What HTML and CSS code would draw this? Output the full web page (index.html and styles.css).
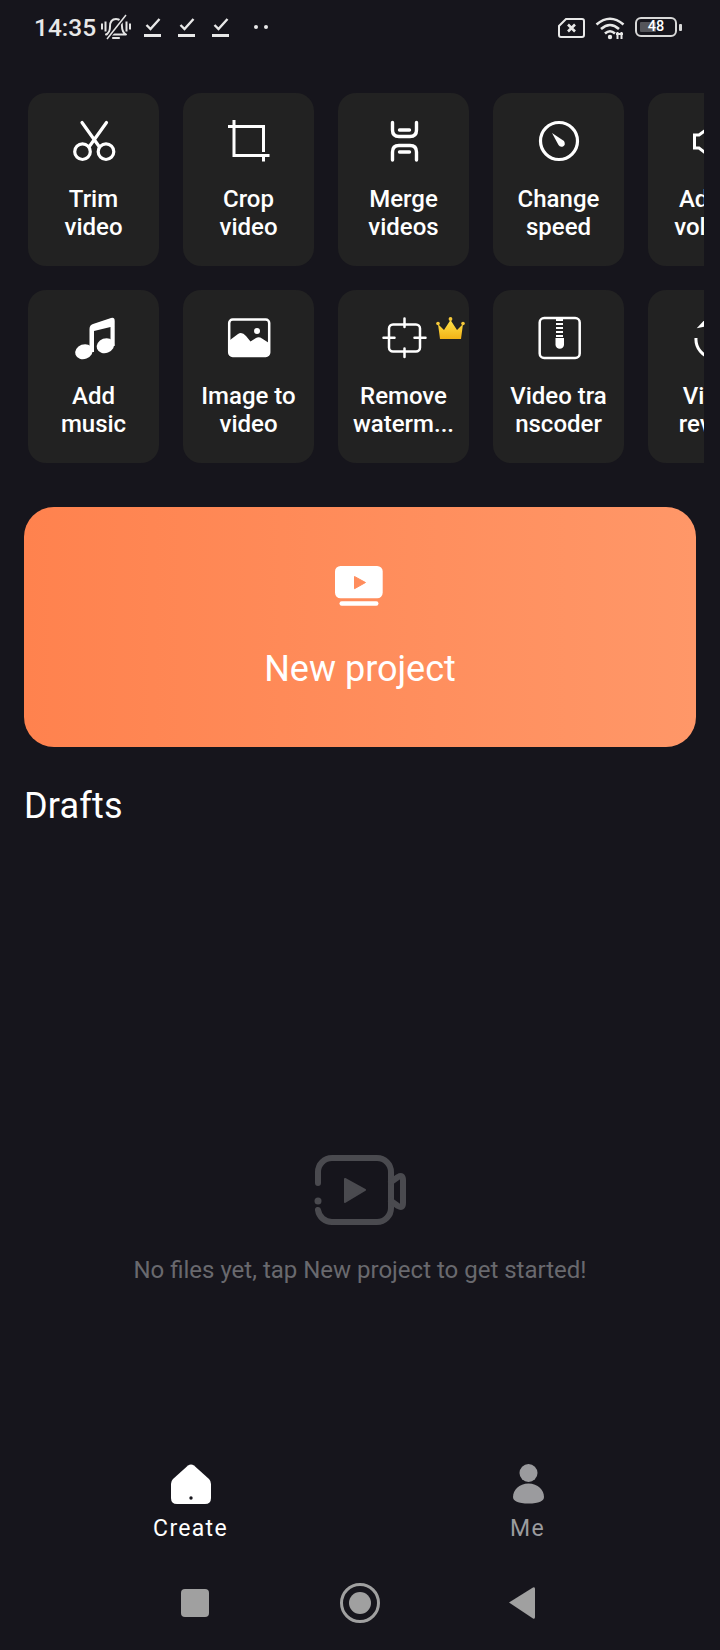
FILE: index.html

```html
<!DOCTYPE html>
<html lang="en">
<head>
  <meta charset="UTF-8" />
  <meta name="viewport" content="width=device-width, initial-scale=1.0"/>
  <title>Create</title>
  <link rel="stylesheet" href="styles.css">
</head>
<body>
<div class="page">

  <!-- status bar -->
  <div class="status">
    <span class="clock">14:35</span>
    <svg class="st-bell" viewBox="0 0 30 26"><path d="M6 20Q9 18 9 12.500Q9 5 15 5Q21 5 21 12.500Q21 18 25 20.500H5Z" fill="none" stroke="#e4e4e4" stroke-width="2" stroke-linejoin="round"/><path d="M12 24H18" stroke="#e4e4e4" stroke-width="2.200" stroke-linecap="round"/><path d="M6 25L25 1" stroke="#16151c" stroke-width="4"/><path d="M6 25L25 1" stroke="#e4e4e4" stroke-width="1.500"/><path d="M1 9.500V15.500M4.500 7.500V17.500M25.500 7.500V17.500M29 9.500V15.500" stroke="#e4e4e4" stroke-width="2"/></svg>
    <svg class="st-check" viewBox="0 0 17 20"><path d="M2.500 8L6.500 12L15.500 2" fill="none" stroke="#e8e8e8" stroke-width="2.400"/><path d="M0 18.500H17" stroke="#e8e8e8" stroke-width="3"/></svg>
    <svg class="st-check" viewBox="0 0 17 20"><path d="M2.500 8L6.500 12L15.500 2" fill="none" stroke="#e8e8e8" stroke-width="2.400"/><path d="M0 18.500H17" stroke="#e8e8e8" stroke-width="3"/></svg>
    <svg class="st-check" viewBox="0 0 17 20"><path d="M2.500 8L6.500 12L15.500 2" fill="none" stroke="#e8e8e8" stroke-width="2.400"/><path d="M0 18.500H17" stroke="#e8e8e8" stroke-width="3"/></svg>
    <span class="st-dots"><i></i><i></i></span>
    <span class="st-right">
      <svg class="st-sim" viewBox="0 0 27 20"><path d="M8 1H24Q26 1 26 3V17Q26 19 24 19H3Q1 19 1 17V8Z" fill="none" stroke="#e8e8e8" stroke-width="2"/><path d="M10 6.500L17 13.500M17 6.500L10 13.500" stroke="#e8e8e8" stroke-width="2.600"/></svg>
      <svg class="st-wifi" viewBox="0 0 30 24"><path d="M1.500 8.500Q15 -3 28.500 8.500M6 13Q15 5 24 13M10 17.500Q15 13 20 17.500" fill="none" stroke="#e8e8e8" stroke-width="2.600"/><circle cx="15" cy="21" r="2.200" fill="#e8e8e8"/><path d="M22.500 16V23M26.500 16V23" stroke="#e8e8e8" stroke-width="2"/><path d="M21 18H28" stroke="#e8e8e8" stroke-width="2"/></svg>
      <span class="battery"><span class="battery-level"></span><span class="battery-num">48</span></span>
      <span class="battery-nub"></span>
    </span>
  </div>

  <!-- tool rows -->
  <div class="tool-row">
    <div class="tool">
      <svg class="ico" viewBox="0 0 42 42"><g fill="none" stroke="#fff" stroke-width="3.200" stroke-linecap="round"><circle cx="9.500" cy="30.700" r="7.800"/><circle cx="33" cy="30.700" r="7.800"/><path d="M9 1.500L26.500 26M33.500 1.500L16 26"/></g></svg>
      <div class="tool-name">Trim<br>video</div>
    </div>
    <div class="tool">
      <svg class="ico" viewBox="0 0 42 42"><path d="M0 5.500H35.500V31M6 -1V34.500H41.500M35.500 34.500V40.500" fill="none" stroke="#fff" stroke-width="3"/></svg>
      <div class="tool-name">Crop<br>video</div>
    </div>
    <div class="tool">
      <svg class="ico" viewBox="0 0 42 42"><path d="M9.500 1.500V9Q9.500 15.500 16 15.500H27Q33.500 15.500 33.500 9V1.500M9.500 39V31Q9.500 24.500 16 24.500H27Q33.500 24.500 33.500 31V39M16.500 9H26.500M16.500 31H26.500" fill="none" stroke="#fff" stroke-width="3.400" stroke-linecap="round"/></svg>
      <div class="tool-name">Merge<br>videos</div>
    </div>
    <div class="tool">
      <svg class="ico" viewBox="0 0 42 42"><circle cx="21" cy="20" r="18.500" fill="none" stroke="#fff" stroke-width="3.200"/><path d="M14 12L26 20Q28 24 25 25.500Q22 26.500 20.500 24Z" fill="#fff"/></svg>
      <div class="tool-name">Change<br>speed</div>
    </div>
    <div class="tool">
      <svg class="ico" viewBox="0 0 42 42"><path d="M12 9.500L6 14H1.500V27H6L12 31.500L19 36V5ZM25 14Q29 20 25 27" fill="none" stroke="#fff" stroke-width="3"/></svg>
      <div class="tool-name">Adjust<br>volume</div>
    </div>
  </div>

  <div class="tool-row">
    <div class="tool">
      <svg class="ico" viewBox="0 0 42 42"><path d="M16.500 11Q16.500 7 20 6L38 0Q41.700 -1 41.700 3V28H37.500V9L21 13V34H16.500Z" fill="#fff"/><ellipse cx="11" cy="33.700" rx="9" ry="7.300" transform="rotate(-20 11 33.700)" fill="#fff"/><ellipse cx="32.500" cy="27.700" rx="9" ry="7.300" transform="rotate(-20 32.500 27.700)" fill="#fff"/></svg>
      <div class="tool-name">Add<br>music</div>
    </div>
    <div class="tool">
      <svg class="ico" viewBox="0 0 42 42"><rect x="1.200" y="1.500" width="40" height="36.500" rx="3.500" fill="none" stroke="#fff" stroke-width="2.500"/><circle cx="29" cy="13" r="3" fill="#fff"/><path d="M2 22L10 16Q14 13.500 18 18L22.500 23.500L28 20Q31 18.500 34 20.500L41 25V36Q41 38 39 38H4Q2 38 2 36Z" fill="#fff"/></svg>
      <div class="tool-name">Image to<br>video</div>
    </div>
    <div class="tool">
      <svg class="ico" viewBox="0 0 42 42"><rect x="6" y="6.500" width="31" height="27" rx="4" fill="none" stroke="#fff" stroke-width="2.500"/><path d="M21.500 0.500V9M21.500 30.500V39M0.500 19.700H11.500M31.500 19.700H42.500" fill="none" stroke="#fff" stroke-width="2.500" stroke-linecap="round"/></svg>
      <div class="tool-name">Remove<br>waterm...</div>
      <svg class="crown" viewBox="0 0 29 23"><defs><linearGradient id="gold" x1="0" y1="0" x2="0" y2="1"><stop offset="0" stop-color="#ffe24a"/><stop offset="1" stop-color="#f2b216"/></linearGradient></defs><path d="M2 7L8 13L14.500 3L21 13L27 7L25 22H4Z" fill="url(#gold)"/><circle cx="2" cy="6.500" r="1.800" fill="#f6c93a"/><circle cx="14.500" cy="2" r="1.900" fill="#f6c93a"/><circle cx="27" cy="6.500" r="1.800" fill="#f6c93a"/></svg>
    </div>
    <div class="tool">
      <svg class="ico" viewBox="0 0 42 42"><rect x="1.700" y="0" width="40" height="40" rx="4.500" fill="none" stroke="#fff" stroke-width="2.500"/><path d="M17.500 20H26V26.500A4.200 4.200 0 0 1 17.500 26.500Z" fill="#fff"/><path d="M18 2H25M18 6H25M18 10H25M18 14H25M18 18H25" stroke="#fff" stroke-width="2"/></svg>
      <div class="tool-name">Video tra<br>nscoder</div>
    </div>
    <div class="tool">
      <svg class="ico" viewBox="0 0 42 42"><path d="M3 20A18.500 18.500 0 1 0 24 3" fill="none" stroke="#fff" stroke-width="3"/><path d="M11.500 2L3.700 10.300L24 6Z" fill="#fff"/></svg>
      <div class="tool-name">Video<br>review</div>
    </div>
  </div>

  <!-- main button -->
  <div class="new-project">
    <svg class="new-ico" viewBox="0 0 48 40"><rect x="0" y="0" width="47.700" height="32.300" rx="5.500" fill="#fff"/><path d="M19.500 10.500L30.500 16.500L19.500 22.700Z" fill="#ff8d5d" stroke="#ff8d5d" stroke-width="1" stroke-linejoin="round"/><rect x="4.500" y="35.300" width="39" height="4.500" rx="2.200" fill="#fff"/></svg>
    <div class="new-label">New project</div>
  </div>

  <h2 class="drafts">Drafts</h2>

  <!-- empty state -->
  <div class="empty">
    <svg class="empty-ico" viewBox="0 0 94 74"><g fill="none" stroke="#4a4a4f" stroke-width="6" stroke-linecap="round" stroke-linejoin="round"><path d="M4 30V19A14 14 0 0 1 18 5H63A14 14 0 0 1 77 19V55A14 14 0 0 1 63 69H18A14 14 0 0 1 4 57"/><path d="M77 29L84 24Q89 21 89 27V50Q89 56 84 53L77 48"/></g><circle cx="4" cy="48" r="3.500" fill="#4a4a4f"/><path d="M31 26L51 37L31 49Z" fill="#4a4a4f" stroke="#4a4a4f" stroke-width="2" stroke-linejoin="round"/></svg>
    <div class="empty-text">No files yet, tap New project to get started!</div>
  </div>

  <!-- bottom tabs -->
  <div class="tabs">
    <div class="tab active">
      <svg class="tab-ico" viewBox="0 0 40 40"><path d="M17 1.500Q20 -0.500 23 1.500L38 15Q40 17 40 20V34Q40 40 34 40H6Q0 40 0 34V20Q0 17 2 15Z" fill="#fff"/><circle cx="20" cy="34" r="1.700" fill="#16151c"/></svg>
      <div>Create</div>
    </div>
    <div class="tab">
      <svg class="tab-ico" viewBox="0 0 40 40"><circle cx="20.500" cy="9" r="9" fill="#9b9b9e"/><path d="M20.500 19.500C30 19.500 36 26 36 33C36 37 31 39.500 20.500 39.500C10 39.500 5 37 5 33C5 26 11 19.500 20.500 19.500Z" fill="#9b9b9e"/></svg>
      <div>Me</div>
    </div>
  </div>

  <!-- android nav -->
  <div class="sysnav">
    <span class="sys-square"></span>
    <span class="sys-home"><i></i></span>
    <svg class="sys-back" viewBox="0 0 27 34"><path d="M1 16.500L25 1.500Q27 0.500 27 3V31Q27 33.500 25 32.500Z" fill="#a0a0a0"/></svg>
  </div>

</div>
</body>
</html>
```

FILE: styles.css

```css
* { box-sizing: border-box; }
html, body { margin: 0; padding: 0; }
body { background: #16151c; color: #fff; font-family: Roboto, "Liberation Sans", sans-serif; }
.page { width: 720px; height: 1650px; display: flex; flex-direction: column; overflow: hidden; }

/* status bar */
.status { height: 93px; display: flex; align-items: flex-start; padding: 14px 0 0 35px; color: #e8e8e8; }
.clock { font-size: 24.500px; line-height: 28px; font-weight: 500; width: 67px; margin-left: -1px; }
.st-bell { width: 30px; height: 26px; margin-right: 13px; }
.st-check { width: 17px; height: 20px; margin: 3px 17px 0 0; }
.st-dots { display: flex; gap: 6px; margin: 11px 0 0 8px; }
.st-dots i { width: 4px; height: 4px; border-radius: 50%; background: #e8e8e8; }
.st-right { display: flex; align-items: flex-start; position: absolute; left: 558px; top: 16px; }
.st-sim { width: 27px; height: 20px; margin: 2px 10px 0 0; }
.st-wifi { width: 30px; height: 24px; margin-right: 10px; }
.battery { width: 42px; height: 20px; margin-top: 1px; border: 2px solid #d8d8d8; border-radius: 6px; position: relative; display: flex; align-items: center; justify-content: center; }
.battery-level { position: absolute; left: 3px; top: 3px; bottom: 3px; width: 16px; background: #55555a; border-radius: 1px; }
.battery-num { position: relative; font-size: 14.500px; font-weight: 500; line-height: 16px; color: #fff; }
.battery-nub { width: 3px; height: 7px; margin: 7.500px 0 0 2px; background: #d8d8d8; border-radius: 1px; }

/* tools */
.tool-row { display: flex; gap: 24px; width: 704px; padding-left: 28px; margin-bottom: 24px; overflow: hidden; }
.tool { flex: 0 0 131px; height: 173px; background: #222222; border-radius: 18px; padding-top: 28px; text-align: center; position: relative; }
.ico { display: block; width: 42px; height: 42px; margin: 0 auto 22px; overflow: visible; }
.tool-name { font-size: 24px; line-height: 28px; font-weight: 500; white-space: nowrap; }
.crown { position: absolute; left: 98px; top: 27px; width: 29px; height: 23px; }

/* new project */
.new-project { width: 672px; height: 240px; margin: 20px 0 0 24px; border-radius: 30px; background: linear-gradient(90deg, #ff824e, #ff9768); text-align: center; padding-top: 59px; }
.new-ico { display: block; width: 48px; height: 40px; margin: 0 auto 41px; transform: translateX(-1px); }
.new-label { font-size: 36px; line-height: 44px; }
.drafts { margin: 37px 0 0 24px; font-size: 36px; line-height: 44px; font-weight: 400; letter-spacing: 0.2px; }

/* empty state */
.empty { margin-top: 325px; text-align: center; }
.empty-ico { display: block; width: 94px; height: 74px; margin: 0 0 28px 314px; }
.empty-text { font-size: 24px; line-height: 30px; color: #69696e; }

/* bottom */
.tabs { margin-top: auto; display: flex; padding-left: 22px; }
.tab { width: 337px; text-align: center; font-size: 23px; line-height: 28px; letter-spacing: 1.300px; color: #9b9b9e; }
.tab.active { color: #fff; }
.tab-ico { display: block; width: 40px; height: 40px; margin: 0 auto 11px; }
.sysnav { height: 107px; display: flex; justify-content: center; align-items: center; gap: 131px; padding: 13px 5px 0 0; }
.sys-square { width: 28px; height: 28px; border-radius: 4px; background: #a0a0a0; }
.sys-home { width: 40px; height: 40px; border: 3px solid #a0a0a0; border-radius: 50%; display: flex; align-items: center; justify-content: center; }
.sys-home i { width: 22px; height: 22px; border-radius: 50%; background: #a0a0a0; }
.sys-back { width: 27px; height: 34px; margin-left: -3px; }
```
